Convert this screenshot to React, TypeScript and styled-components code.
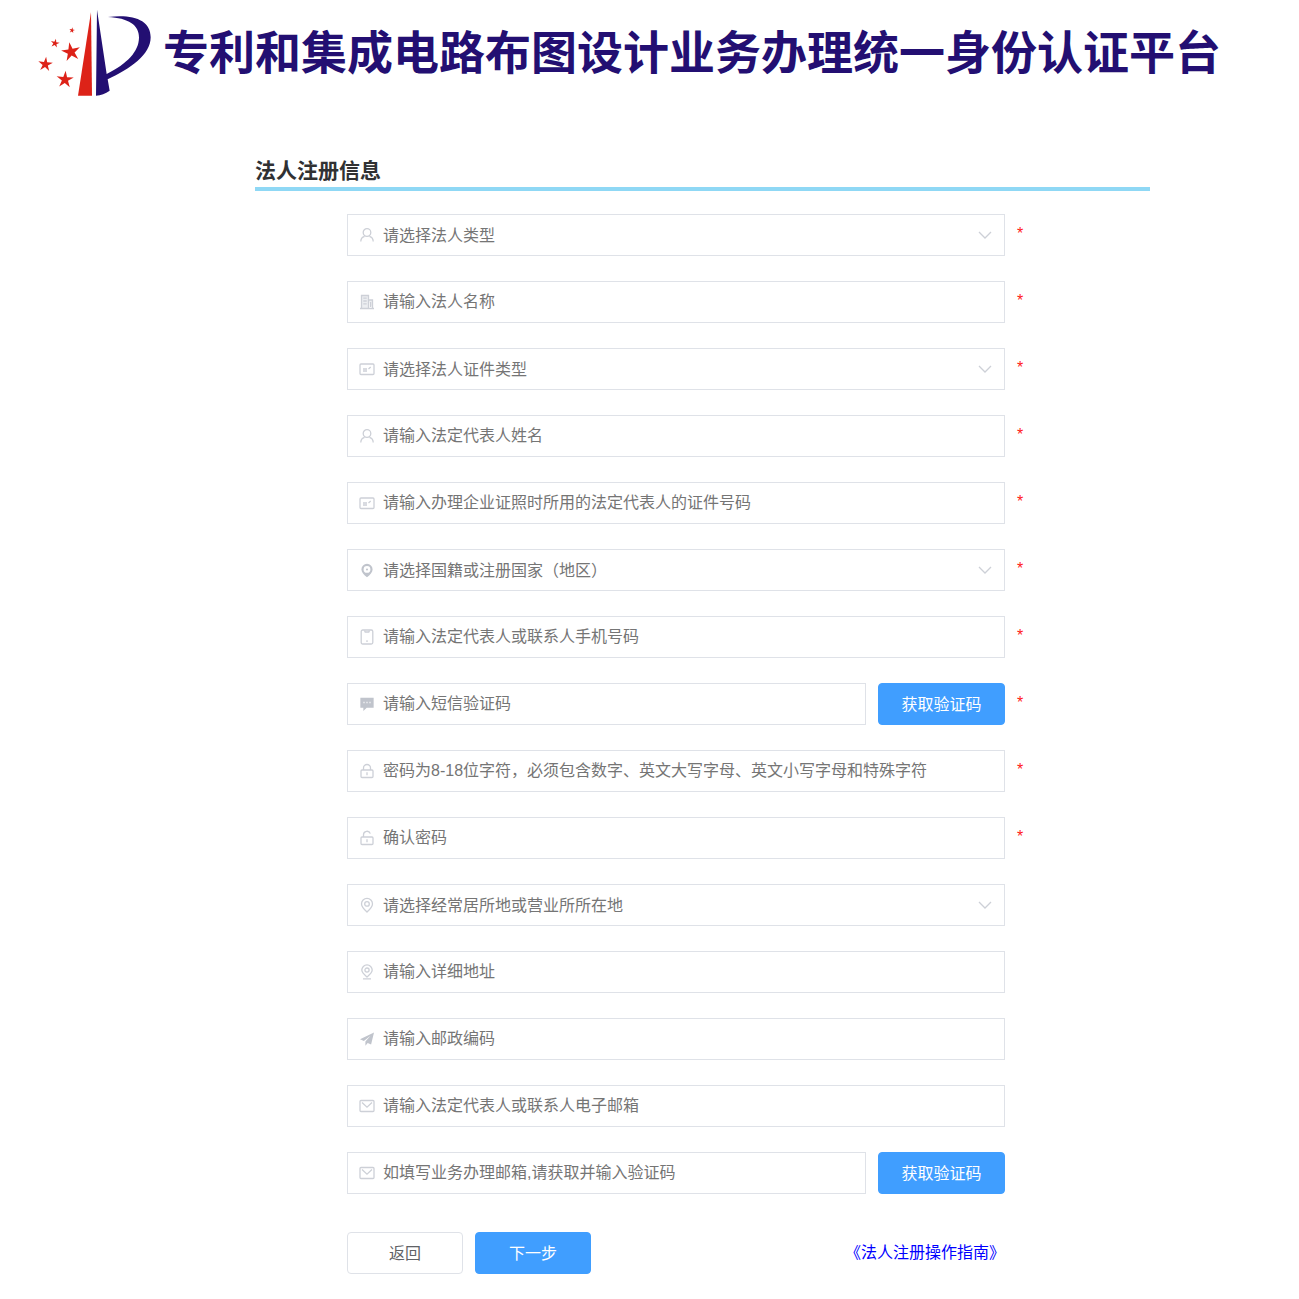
import React from 'react';
import styled, { createGlobalStyle } from 'styled-components';

const GlobalStyle = createGlobalStyle`
  *, *::before, *::after { box-sizing: border-box; }
  body {
    margin: 0;
    background: #fff;
    color: #303133;
    font-family: "Liberation Sans", "Noto Sans CJK SC", sans-serif;
    font-size: 16px;
  }
`;

const Header = styled.header`
  display: flex;
  align-items: center;
  gap: 11px;
  padding: 9px 38px 0;
`;

const Logo = styled.svg`
  flex: none;
  width: 114px;
  height: 87px;
`;

const SiteTitle = styled.h1`
  margin: 0;
  color: #230f72;
  font-size: 46px;
  line-height: 86px;
  font-weight: 700;
  white-space: nowrap;
`;

const Main = styled.main`
  padding: 60px 149px 24px 255px;
`;

const SectionTitle = styled.h2`
  margin: 0;
  padding-bottom: 1px;
  border-bottom: 4px solid #8fd8f5;
  font-size: 21px;
  line-height: 30px;
  font-weight: 700;
`;

const Form = styled.form`
  display: flex;
  flex-direction: column;
  gap: 25px;
  padding: 23px 116px 0 92px;
`;

const Row = styled.div`
  display: grid;
  grid-template-columns: 1fr 17px;
  column-gap: 12px;
`;

const Controls = styled.div`
  display: flex;
  gap: 12px;
`;

const Box = styled.label`
  flex: 1;
  min-width: 0;
  display: flex;
  align-items: center;
  gap: 8px;
  height: 42px;
  padding: 0 11px;
  border: 1px solid #dfe2e8;
  color: #c0c4cc;
  &:focus-within { border-color: #409eff; }
`;

const Glyph = styled.svg`
  flex: none;
  width: 16px;
  height: 16px;
  fill: none;
  stroke: #cdd0d7;
  stroke-width: 1.3;
`;

const TextInput = styled.input`
  flex: 1;
  min-width: 0;
  height: 40px;
  padding: 0;
  border: 0;
  outline: 0;
  background: transparent;
  color: #606266;
  font: inherit;
  &::placeholder { color: #757575; opacity: 1; }
`;

const Select = styled.select`
  flex: 1;
  min-width: 0;
  height: 40px;
  padding: 0;
  border: 0;
  outline: 0;
  appearance: none;
  background: transparent;
  color: #757575;
  font: inherit;
`;

const Required = styled.span`
  color: #ff1a1a;
  font-size: 16px;
  line-height: 40px;
`;

const Button = styled.button<{ $primary?: boolean; $width: number }>`
  flex: none;
  width: ${(p) => p.$width}px;
  height: 42px;
  padding: 0 0 2px;
  border: 1px solid ${(p) => (p.$primary ? '#409eff' : '#dfe2e8')};
  border-radius: 4px;
  background: ${(p) => (p.$primary ? '#409eff' : '#fff')};
  color: ${(p) => (p.$primary ? '#fff' : '#606266')};
  font: inherit;
  cursor: pointer;
`;

const Footer = styled.div`
  display: flex;
  align-items: center;
  gap: 12px;
  padding: 13px 29px 0 0;
`;

const GuideLink = styled.a`
  margin-left: auto;
  color: #00f;
  line-height: 24px;
  text-decoration: none;
`;

const icons = {
  user: (
    <>
      <circle cx="8" cy="5.5" r="3.8" />
      <path d="M1.8 14.5c0-3 1.7-4.6 3.8-5.2M14.2 14.5c0-3-1.7-4.6-3.8-5.2" />
    </>
  ),
  building: (
    <>
      <path fill="#eceef1" d="M2.5 14.5V1.5h7v13M9.5 6h4v8.5M1 14.5h14" />
      <path d="M4.3 4.200h3.400M4.300 7h3.400M4.300 9.800h3.400M11.500 8v5" />
    </>
  ),
  card: (
    <>
      <rect x="1" y="3" width="14" height="10.5" rx="1" />
      <path d="M4 8h4M4 10h4M9.5 8l2.200-2" />
    </>
  ),
  pinSolid: (
    <path
      fill="currentColor"
      stroke="none"
      fillRule="evenodd"
      d="M8 1.8a5.6 5.6 0 0 1 5.6 5.6c0 3-2.5 5.2-5.6 7.8-3.1-2.6-5.6-4.8-5.6-7.8A5.6 5.6 0 0 1 8 1.8Zm0 2.200a3.400 3.400 0 1 0 0 6.800 3.400 3.400 0 0 0 0-6.800Zm0 2.400a1 1 0 1 1 0 2 1 1 0 0 1 0-2Z"
    />
  ),
  mobile: (
    <>
      <rect x="2.2" y="1" width="11.6" height="14" rx="1.5" />
      <path d="M5.5 1.5l.7 1.5h3.6l.7-1.5M8 11.2v1.800" />
    </>
  ),
  comment: (
    <>
      <path fill="currentColor" stroke="#c0c4cc" d="M2 2.5h12v8.5H7.5L5 13.5V11H2Z" />
      <path stroke="#fff" d="M4.5 6.5h1M7.5 6.5h1M10.5 6.5h1" />
    </>
  ),
  lock: (
    <>
      <rect x="2" y="7" width="12" height="7.5" rx="1" />
      <path d="M4.500 7V5a3.500 3.500 0 0 1 7 0V7M8 9.200v3" />
    </>
  ),
  unlock: (
    <>
      <rect x="2" y="7" width="12" height="7.5" rx="1" />
      <path d="M4.500 7V4.800a3.500 3.500 0 0 1 6.800-1.200M8 9.200v3" />
    </>
  ),
  pin: (
    <>
      <path d="M8 15C5 12.2 2.5 9.8 2.5 6.9a5.500 5.500 0 0 1 11 0C13.5 9.8 11 12.2 8 15Z" />
      <circle cx="8" cy="6.9" r="2.3" />
    </>
  ),
  place: (
    <>
      <path d="M8 13C5.300 10.800 2.800 8.900 2.800 6.100a5.200 5.200 0 0 1 10.400 0C13.200 8.900 10.700 10.800 8 13ZM4 14.800h8" />
      <circle cx="8" cy="6.1" r="2.1" />
    </>
  ),
  plane: (
    <path fill="currentColor" stroke="none" d="M15 1.5 1 8.2l3.9 1.7 6.600-5.200-5.100 5.900v4.200l2.300-2.800 3.400 1.600Z" />
  ),
  mail: (
    <>
      <rect x="1" y="2.5" width="14" height="11" rx="1" />
      <path d="M3 4.500l5 4.700 5-4.700" />
    </>
  ),
  chevron: <path d="M2 5l6 6 6-6" />,
};

type IconName = keyof typeof icons;

const Icon = ({ name }: { name: IconName }) => (
  <Glyph viewBox="0 0 16 16" aria-hidden="true">
    {icons[name]}
  </Glyph>
);

const starPoints = (cx: number, cy: number, r: number, turn: number) =>
  Array.from({ length: 10 }, (_, i) => {
    const radius = i % 2 ? r * 0.36 : r;
    const a = ((turn - 90 + i * 36) * Math.PI) / 180;
    return `${(cx + radius * Math.cos(a)).toFixed(1)},${(cy + radius * Math.sin(a)).toFixed(1)}`;
  }).join(' ');

const stars = [
  [156, 91, 9, 10],
  [105, 130, 14, 12],
  [153, 156, 30, -10],
  [76, 193, 23, 6],
  [135, 239, 27, 4],
];

interface Field {
  id: string;
  icon: IconName;
  text: string;
  kind?: 'select' | 'password' | 'tel' | 'email';
  required?: boolean;
  code?: boolean;
}

const fields: Field[] = [
  { id: 'type', icon: 'user', text: '请选择法人类型', kind: 'select', required: true },
  { id: 'name', icon: 'building', text: '请输入法人名称', required: true },
  { id: 'certType', icon: 'card', text: '请选择法人证件类型', kind: 'select', required: true },
  { id: 'legalName', icon: 'user', text: '请输入法定代表人姓名', required: true },
  { id: 'certNo', icon: 'card', text: '请输入办理企业证照时所用的法定代表人的证件号码', required: true },
  { id: 'country', icon: 'pinSolid', text: '请选择国籍或注册国家（地区）', kind: 'select', required: true },
  { id: 'phone', icon: 'mobile', text: '请输入法定代表人或联系人手机号码', kind: 'tel', required: true },
  { id: 'smsCode', icon: 'comment', text: '请输入短信验证码', required: true, code: true },
  { id: 'password', icon: 'lock', text: '密码为8-18位字符，必须包含数字、英文大写字母、英文小写字母和特殊字符', kind: 'password', required: true },
  { id: 'confirm', icon: 'unlock', text: '确认密码', kind: 'password', required: true },
  { id: 'region', icon: 'pin', text: '请选择经常居所地或营业所所在地', kind: 'select' },
  { id: 'address', icon: 'place', text: '请输入详细地址' },
  { id: 'postcode', icon: 'plane', text: '请输入邮政编码' },
  { id: 'email', icon: 'mail', text: '请输入法定代表人或联系人电子邮箱', kind: 'email' },
  { id: 'emailCode', icon: 'mail', text: '如填写业务办理邮箱,请获取并输入验证码', code: true },
];

const FieldRow = ({ field }: { field: Field }) => (
  <Row>
    <Controls>
      <Box htmlFor={field.id}>
        <Icon name={field.icon} />
        {field.kind === 'select' ? (
          <>
            <Select id={field.id} aria-label={field.text} defaultValue="">
              <option value="">{field.text}</option>
            </Select>
            <Icon name="chevron" />
          </>
        ) : (
          <TextInput id={field.id} type={field.kind ?? 'text'} aria-label={field.text} placeholder={field.text} />
        )}
      </Box>
      {field.code && (
        <Button type="button" $primary $width={127}>
          获取验证码
        </Button>
      )}
    </Controls>
    {field.required && <Required>*</Required>}
  </Row>
);

export default function App() {
  return (
    <>
      <GlobalStyle />
      <Header>
        <Logo viewBox="54 27 342 261" aria-hidden="true">
          <g fill="#dd2218">
            {stars.map(([x, y, r, turn]) => (
              <polygon key={x} points={starPoints(x, y, r, turn)} />
            ))}
            <path d="M213 36 216 287H174Z" />
          </g>
          <path
            fill="#230f72"
            d="M231 29 260 222C322 190 356 155 357 113C358 75 325 54 264 51C340 42 392 60 392 112C392 165 330 207 263 238L269 272C256 281 243 286 228 287Z"
          />
        </Logo>
        <SiteTitle>专利和集成电路布图设计业务办理统一身份认证平台</SiteTitle>
      </Header>
      <Main>
        <SectionTitle>法人注册信息</SectionTitle>
        <Form onSubmit={(e) => e.preventDefault()}>
          {fields.map((f) => (
            <FieldRow key={f.id} field={f} />
          ))}
          <Footer>
            <Button type="button" $width={116}>
              返回
            </Button>
            <Button type="submit" $primary $width={116}>
              下一步
            </Button>
            <GuideLink href="#guide">《法人注册操作指南》</GuideLink>
          </Footer>
        </Form>
      </Main>
    </>
  );
}
